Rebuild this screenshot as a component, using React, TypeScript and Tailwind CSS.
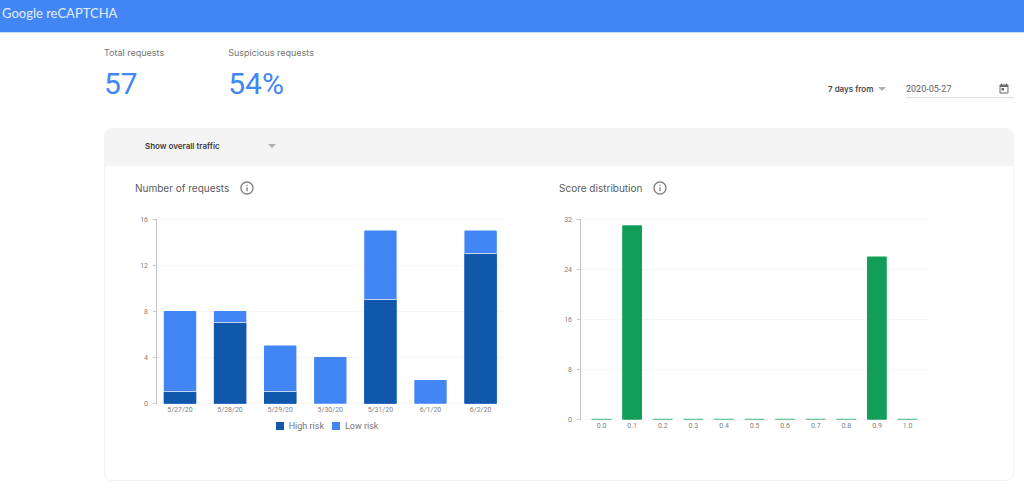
import type { ReactNode } from "react";

const requests = [
  { date: "5/27/20", high: 1, low: 7 },
  { date: "5/28/20", high: 7, low: 1 },
  { date: "5/29/20", high: 1, low: 4 },
  { date: "5/30/20", high: 0, low: 4 },
  { date: "5/31/20", high: 9, low: 6 },
  { date: "6/1/20", high: 0, low: 2 },
  { date: "6/2/20", high: 13, low: 2 },
];

const scores = [0, 31, 0, 0, 0, 0, 0, 0, 0, 26, 0];

const TOP = 14;
const AXIS_X = 22;

function Caret() {
  return (
    <svg viewBox="0 0 8 4" className="pointer-events-none h-1 w-2 shrink-0 fill-[#b0b0b0]" aria-hidden="true">
      <path d="M0 0h8L4 4z" />
    </svg>
  );
}

function InfoIcon() {
  return (
    <svg viewBox="0 0 24 24" className="size-4 fill-[#808080]" aria-hidden="true">
      <path d="M11 17h2v-6h-2v6zm1-15C6.48 2 2 6.48 2 12s4.48 10 10 10 10-4.48 10-10S17.52 2 12 2zm0 18c-4.41 0-8-3.59-8-8s3.59-8 8-8 8 3.59 8 8-3.59 8-8 8zM11 9h2V7h-2v2z" />
    </svg>
  );
}

function Stat({ label, value }: { label: string; value: string }) {
  return (
    <div>
      <h2 className="text-[9px] leading-4 text-[#757575]">{label}</h2>
      <p className="mt-1 font-[Roboto,sans-serif] text-[30px] leading-[38px] text-[#4285f4]">{value}</p>
    </div>
  );
}

function Axis({ ticks, height }: { ticks: number[]; height: number }) {
  const max = ticks[0];
  return (
    <g>
      {ticks.map((tick) => {
        const y = TOP + height - (tick / max) * height;
        return (
          <g key={tick}>
            <path d={`M${AXIS_X} ${y + 0.5}H370`} stroke="#f5f5f5" />
            <path d={`M18 ${y + 0.5}H${AXIS_X}`} stroke="#c6c6c6" />
            <text x={13} y={y + 3} textAnchor="end" fill="#808080">
              {tick}
            </text>
          </g>
        );
      })}
      <path d={`M21.5 ${TOP}V${TOP + height + 1}`} stroke="#c6c6c6" />
    </g>
  );
}

function RequestsChart() {
  const height = 184;
  const base = TOP + height;
  const unit = height / 16;
  return (
    <svg
      viewBox="0 0 370 215"
      className="w-[370px] max-w-full font-[Roboto,sans-serif] text-[7px]"
      role="img"
      aria-label="Number of requests"
    >
      <Axis ticks={[16, 12, 8, 4, 0]} height={height} />
      {requests.map(({ date, high, low }, i) => {
        const x = 28.8 + i * 50.1;
        const top = base - (high + low) * unit;
        const split = base - high * unit;
        return (
          <g key={date}>
            <rect x={x} y={top} width="32.4" height={(high + low) * unit + 0.7} rx="1" fill="#4285f4" />
            {high > 0 && (
              <>
                <rect x={x} y={split} width="32.4" height={high * unit + 0.7} fill="#1158ab" />
                <path d={`M${x} ${split}h32.4`} stroke="#c3d7f5" />
              </>
            )}
            <text x={x + 16.2} y={TOP + height + 9} textAnchor="middle" fill="#808080">
              {date}
            </text>
          </g>
        );
      })}
    </svg>
  );
}

function ScoreChart() {
  const height = 200;
  const base = TOP + height;
  const unit = height / 32;
  return (
    <svg
      viewBox="0 0 370 235"
      className="w-[370px] max-w-full font-[Roboto,sans-serif] text-[7px]"
      role="img"
      aria-label="Score distribution"
    >
      <Axis ticks={[32, 24, 16, 8, 0]} height={height} />
      {scores.map((count, i) => {
        const x = 32.6 + i * 30.6;
        return (
          <g key={i}>
            {count > 0 ? (
              <rect x={x} y={base - count * unit} width="19.8" height={count * unit + 0.7} rx="1" fill="#129d58" />
            ) : (
              <rect x={x} y={base - 0.3} width="19.8" height="1.3" fill="#6cc698" />
            )}
            <text x={x + 10} y={TOP + height + 9} textAnchor="middle" fill="#808080">
              {(i / 10).toFixed(1)}
            </text>
          </g>
        );
      })}
    </svg>
  );
}

function Panel({ title, children }: { title: string; children: ReactNode }) {
  return (
    <section>
      <div className="flex h-4 items-center gap-2.5">
        <h3 className="text-[10px] leading-4 text-[#5a5a5a]">{title}</h3>
        <button type="button" aria-label={`About ${title}`}>
          <InfoIcon />
        </button>
      </div>
      <div className="mt-[9px]">{children}</div>
    </section>
  );
}

export default function App() {
  return (
    <div className="min-h-screen bg-white font-[Inter,sans-serif]">
      <header className="flex h-[33px] items-center border-b border-[#c6dafc] bg-[#4285f4] px-0.5 pb-1.5">
        <h1 className="font-[Lato,sans-serif] text-[13px] leading-5 text-[#e3edfd]">Google reCAPTCHA</h1>
      </header>

      <main className="pr-2.5 pb-2 pl-[104px]">
        <div className="flex items-end justify-between pt-3">
          <div className="flex gap-16">
            <Stat label="Total requests" value="57" />
            <Stat label="Suspicious requests" value="54%" />
          </div>
          <div className="flex items-center gap-5 pb-[5px]">
            <div className="flex items-center">
              <select
                aria-label="Period"
                className="w-[50px] appearance-none text-[8px] leading-4 font-semibold text-[#4a4a4a]"
              >
                <option>7 days from</option>
              </select>
              <Caret />
            </div>
            <div className="flex h-[18px] w-[108px] items-center justify-between border-b border-[#dcdcdc] pr-1">
              <input
                aria-label="Start date"
                defaultValue="2020-05-27"
                className="w-20 font-[Roboto,sans-serif] text-[9px] leading-4 text-[#5f5f5f] outline-none"
              />
              <button type="button" aria-label="Choose date">
                <svg viewBox="0 0 24 24" className="size-3 fill-[#6b6b6b]" aria-hidden="true">
                  <path d="M19 3h-1V1h-2v2H8V1H6v2H5c-1.11 0-1.99.9-1.99 2L3 19c0 1.1.89 2 2 2h14c1.1 0 2-.9 2-2V5c0-1.1-.9-2-2-2zm0 16H5V8h14v11zM7 10h5v5H7z" />
                </svg>
              </button>
            </div>
          </div>
        </div>

        <div className="mt-[25px] rounded-lg border border-[#f3f3f3]">
          <div className="flex h-[37px] items-center rounded-t-lg bg-[#f4f4f4] px-10 pb-1">
            <select
              aria-label="Traffic"
              className="w-[123px] appearance-none text-[8px] leading-4 font-semibold text-[#3c3c3c]"
            >
              <option>Show overall traffic</option>
            </select>
            <Caret />
          </div>
          <div className="grid grid-cols-2 px-[30px] pt-[14px] pb-10">
            <Panel title="Number of requests">
              <RequestsChart />
              <ul className="flex w-[370px] max-w-full justify-center gap-2 pl-3.5 font-[Roboto,sans-serif] text-[9px] leading-3 text-[#757575]">
                <li className="flex items-center gap-[5px]">
                  <span className="size-2 bg-[#1158ab]" />
                  High risk
                </li>
                <li className="flex items-center gap-[5px]">
                  <span className="size-2 bg-[#4285f4]" />
                  Low risk
                </li>
              </ul>
            </Panel>
            <Panel title="Score distribution">
              <ScoreChart />
            </Panel>
          </div>
        </div>
      </main>
    </div>
  );
}
